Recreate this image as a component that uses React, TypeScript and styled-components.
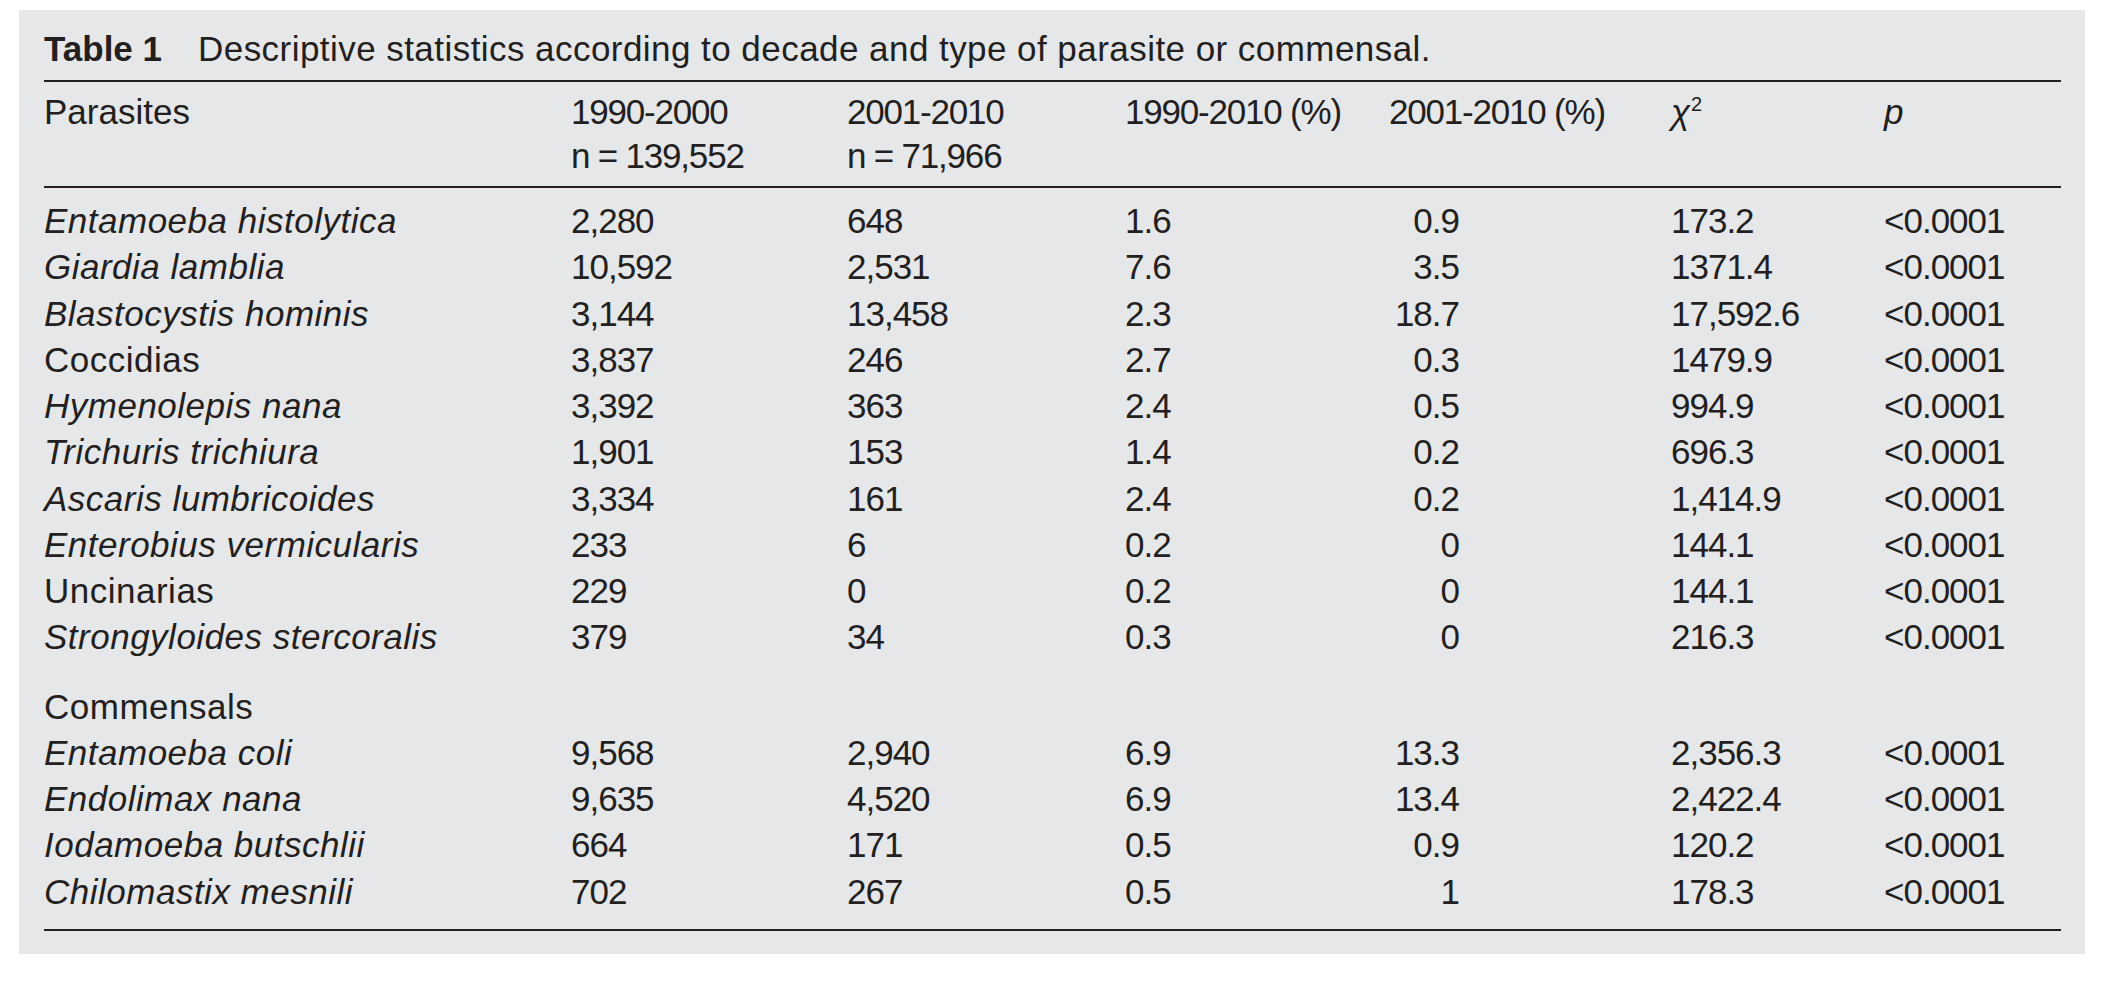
import React from 'react';
import styled, { createGlobalStyle } from 'styled-components';

const GlobalStyle = createGlobalStyle`
  body {
    margin: 0;
    background: #fff;
    color: #231f20;
    font-family: 'Liberation Sans', Arial, sans-serif;
  }
`;

const COLS = '527px 276px 278px 264px 282px 213px 177px';

const Panel = styled.section`
  margin: 10px 0 0 19px;
  width: 2066px;
  height: 944px;
  box-sizing: border-box;
  padding: 15px 24px 0 25px;
  background: #e6e7e9;
`;

const Caption = styled.div`
  font-size: 35px;
  line-height: 46px;
  padding: 1px 0 8px;
  border-bottom: 2px solid #231f20;
  white-space: nowrap;
  letter-spacing: 0.45px;
`;

const CaptionLabel = styled.span`
  font-weight: 700;
  letter-spacing: 0;
  margin-right: 36px;
`;

const HeadRow = styled.div`
  display: grid;
  grid-template-columns: ${COLS};
  font-size: 35px;
  line-height: 44px;
  padding: 8px 0 8px;
  border-bottom: 2px solid #231f20;
`;

const HeadCell = styled.div<{ $tight?: boolean }>`
  display: flex;
  flex-direction: column;
  white-space: nowrap;
  letter-spacing: ${p => (p.$tight ? '-1.2px' : '0')};
`;

const Body = styled.div`
  padding: 10px 0 14px;
  border-bottom: 2px solid #231f20;
`;

const Row = styled.div<{ $gap?: number }>`
  display: grid;
  grid-template-columns: ${COLS};
  font-size: 35px;
  line-height: 46.25px;
  margin-top: ${p => p.$gap ?? 0}px;
`;

const Cell = styled.div<{ $italic?: boolean; $right?: boolean; $num?: boolean }>`
  white-space: nowrap;
  font-style: ${p => (p.$italic ? 'italic' : 'normal')};
  text-align: ${p => (p.$right ? 'right' : 'left')};
  padding-right: ${p => (p.$right ? '212px' : '0')};
  letter-spacing: ${p => (p.$num ? '-1px' : '0.5px')};
`;

const Italic = styled.span`
  font-style: italic;
`;

const Sup = styled.span`
  font-size: 20px;
  line-height: 0;
  vertical-align: 13px;
  margin-left: 1px;
`;

type Entry = [string, boolean, string, string, string, string, string, string];

const parasites: Entry[] = [
  ['Entamoeba histolytica', true, '2,280', '648', '1.6', '0.9', '173.2', '<0.0001'],
  ['Giardia lamblia', true, '10,592', '2,531', '7.6', '3.5', '1371.4', '<0.0001'],
  ['Blastocystis hominis', true, '3,144', '13,458', '2.3', '18.7', '17,592.6', '<0.0001'],
  ['Coccidias', false, '3,837', '246', '2.7', '0.3', '1479.9', '<0.0001'],
  ['Hymenolepis nana', true, '3,392', '363', '2.4', '0.5', '994.9', '<0.0001'],
  ['Trichuris trichiura', true, '1,901', '153', '1.4', '0.2', '696.3', '<0.0001'],
  ['Ascaris lumbricoides', true, '3,334', '161', '2.4', '0.2', '1,414.9', '<0.0001'],
  ['Enterobius vermicularis', true, '233', '6', '0.2', '0', '144.1', '<0.0001'],
  ['Uncinarias', false, '229', '0', '0.2', '0', '144.1', '<0.0001'],
  ['Strongyloides stercoralis', true, '379', '34', '0.3', '0', '216.3', '<0.0001'],
];

const commensals: Entry[] = [
  ['Entamoeba coli', true, '9,568', '2,940', '6.9', '13.3', '2,356.3', '<0.0001'],
  ['Endolimax nana', true, '9,635', '4,520', '6.9', '13.4', '2,422.4', '<0.0001'],
  ['Iodamoeba butschlii', true, '664', '171', '0.5', '0.9', '120.2', '<0.0001'],
  ['Chilomastix mesnili', true, '702', '267', '0.5', '1', '178.3', '<0.0001'],
];

function DataRow({ entry }: { entry: Entry }) {
  const [name, italic, a, b, c, d, chi, p] = entry;
  return (
    <Row>
      <Cell $italic={italic}>{name}</Cell>
      <Cell $num>{a}</Cell>
      <Cell $num>{b}</Cell>
      <Cell $num>{c}</Cell>
      <Cell $num $right>{d}</Cell>
      <Cell $num>{chi}</Cell>
      <Cell $num>{p}</Cell>
    </Row>
  );
}

export default function App() {
  return (
    <>
      <GlobalStyle />
      <Panel>
        <Caption>
          <CaptionLabel>Table 1</CaptionLabel>
          Descriptive statistics according to decade and type of parasite or commensal.
        </Caption>
        <HeadRow>
          <HeadCell>Parasites</HeadCell>
          <HeadCell $tight>
            <span>1990-2000</span>
            <span>n = 139,552</span>
          </HeadCell>
          <HeadCell $tight>
            <span>2001-2010</span>
            <span>n = 71,966</span>
          </HeadCell>
          <HeadCell $tight>1990-2010 (%)</HeadCell>
          <HeadCell $tight>2001-2010 (%)</HeadCell>
          <HeadCell>
            <span>
              <Italic>χ</Italic>
              <Sup>2</Sup>
            </span>
          </HeadCell>
          <HeadCell>
            <Italic>p</Italic>
          </HeadCell>
        </HeadRow>
        <Body>
          {parasites.map(e => (
            <DataRow key={e[0]} entry={e} />
          ))}
          <Row $gap={23}>
            <Cell>Commensals</Cell>
          </Row>
          {commensals.map(e => (
            <DataRow key={e[0]} entry={e} />
          ))}
        </Body>
      </Panel>
    </>
  );
}
